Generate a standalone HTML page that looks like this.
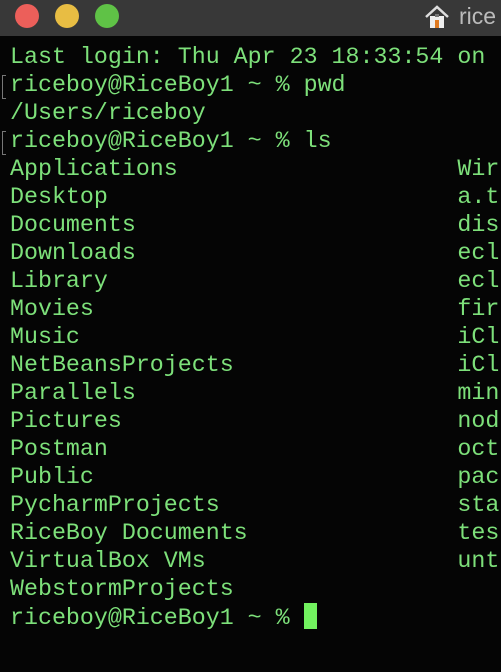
<!DOCTYPE html>
<html><head><style>
html,body{margin:0;padding:0;width:501px;height:672px;overflow:hidden;background:#050505;}
.bar{position:absolute;left:0;top:0;width:501px;height:36px;background:#383838;}
.dot{position:absolute;top:4px;width:24px;height:24px;border-radius:50%;}
.t{position:absolute;left:10px;top:43px;font-family:"Liberation Mono",monospace;font-size:23.3px;line-height:28px;color:#7de07a;white-space:pre;}
.br{position:absolute;left:2px;width:3px;height:22px;border-left:1px solid #777;border-top:1px solid #777;border-bottom:1px solid #777;}
.cur{display:inline-block;width:13px;height:26px;background:#72f25f;vertical-align:-5px;}
</style></head><body>
<div class="bar">
<div class="dot" style="left:15px;background:#ec5f5a"></div>
<div class="dot" style="left:55px;background:#e8bd43"></div>
<div class="dot" style="left:95px;background:#5fc246"></div>
<svg style="position:absolute;left:424px;top:4px" width="26" height="26" viewBox="0 0 26 26"><path d="M2 13 L13 3 L24 13" fill="none" stroke="#ddd" stroke-width="2.5"/><rect x="6" y="12" width="14" height="12" fill="#eee"/><rect x="11" y="16" width="4" height="8" fill="#e07a20"/><rect x="11" y="10" width="4" height="3" fill="#777"/></svg>
<div style="position:absolute;left:459px;top:3px;font-family:'Liberation Sans',sans-serif;font-size:23px;color:#bbb">rice</div>
</div>
<div class="br" style="top:75px"></div>
<div class="br" style="top:131px"></div>
<div class="t">Last login: Thu Apr 23 18:33:54 on
riceboy@RiceBoy1 ~ % pwd
/Users/riceboy
riceboy@RiceBoy1 ~ % ls
Applications                    Wir
Desktop                         a.t
Documents                       dis
Downloads                       ecl
Library                         ecl
Movies                          fir
Music                           iCl
NetBeansProjects                iCl
Parallels                       min
Pictures                        nod
Postman                         oct
Public                          pac
PycharmProjects                 sta
RiceBoy Documents               tes
VirtualBox VMs                  unt
WebstormProjects
riceboy@RiceBoy1 ~ % <span class="cur"></span></div>
</body></html>
